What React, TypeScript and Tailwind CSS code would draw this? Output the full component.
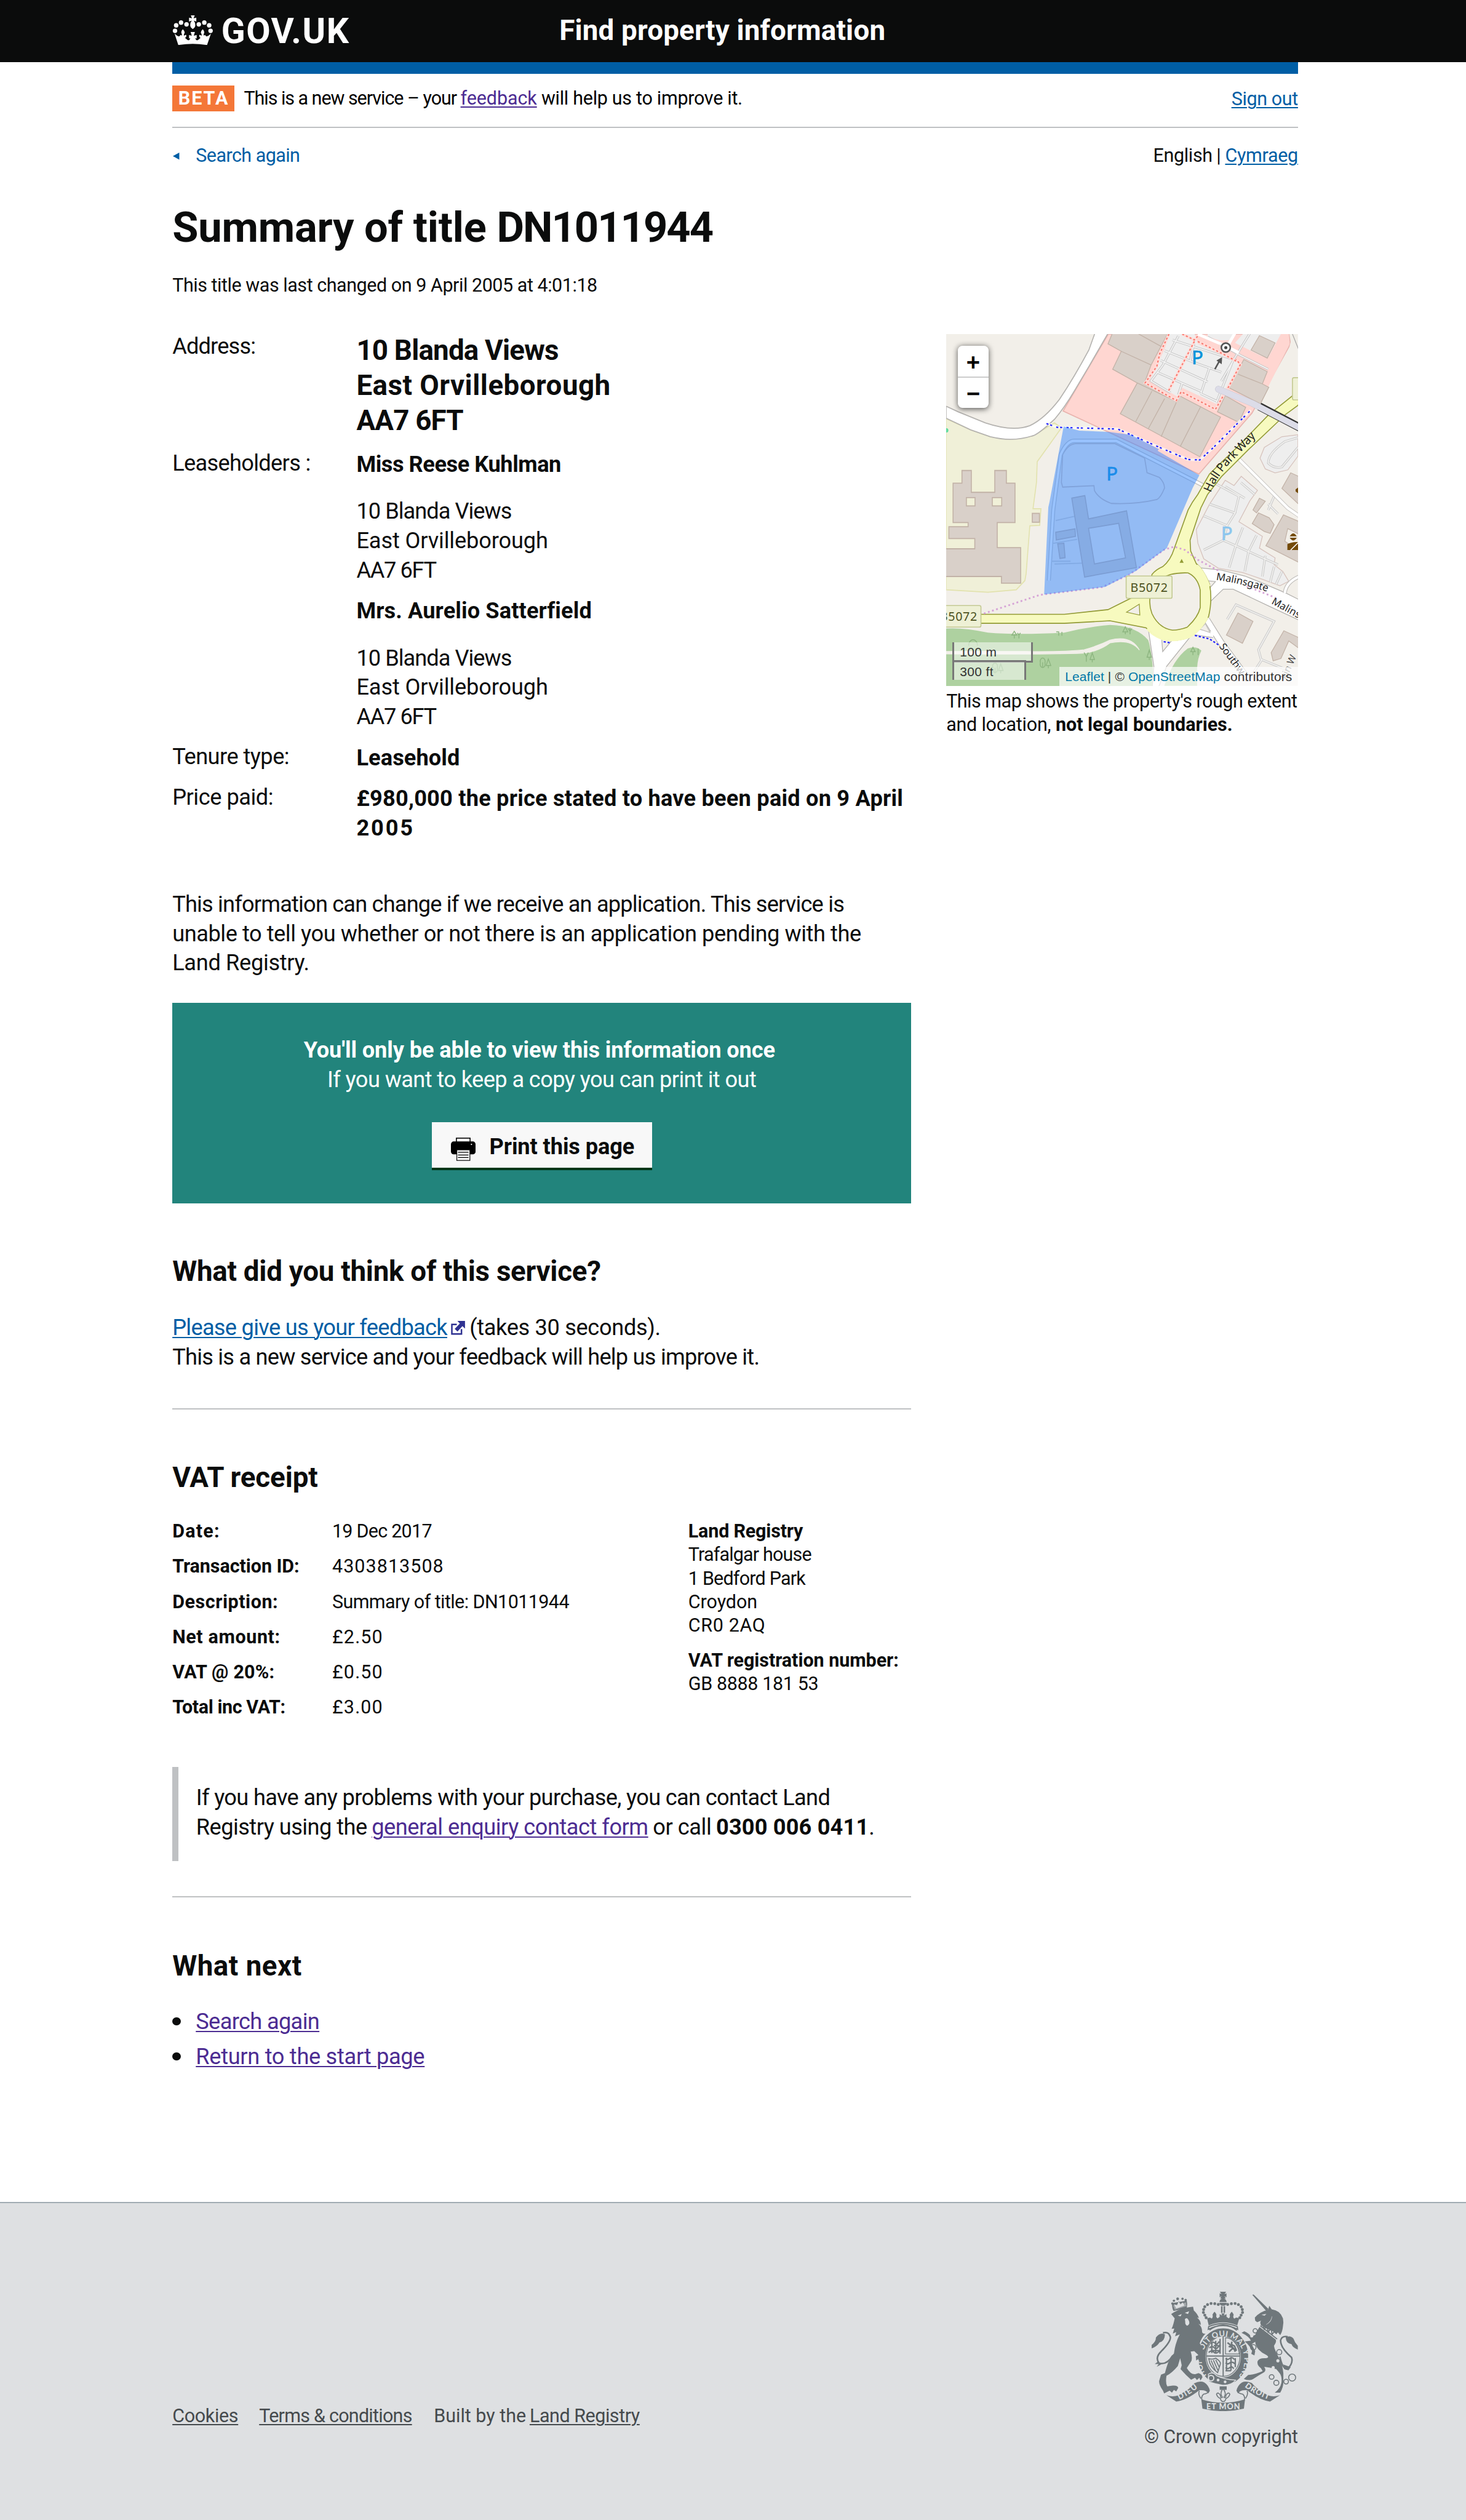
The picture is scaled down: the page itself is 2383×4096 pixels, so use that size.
import React from "react";

const P19 = "text-[19px] leading-[25px]";
const P16 = "text-[16px] leading-[20px]";
const H24 = "text-[24px] leading-[30px] font-bold";
const LINK = "underline decoration-[1.1px] underline-offset-[1.5px]";

function CrownLogo() {
  return (
    <svg className="mt-[12.5px] h-[26px] w-[35px]" viewBox="42 75 210 156" fill="#fff">
      <circle cx="87" cy="115" r="11.5" />
      <circle cx="62" cy="129" r="11.5" />
      <circle cx="56" cy="157" r="11.5" />
      <circle cx="115" cy="124" r="11.5" />
      <circle cx="178" cy="124" r="11.5" />
      <circle cx="206" cy="115" r="11.5" />
      <circle cx="231" cy="129" r="11.5" />
      <circle cx="238" cy="157" r="11.5" />
      <path d="M137 78 H157 L151 93 L165 90 V110 L152 105 Q160 114 160 128 Q160 141 147 148 Q134 141 134 128 Q134 114 142 105 L128 110 V90 L143 93 Z" />
      <path d="M54 172 Q66 184 76 186 Q84 184 83 178 L91 181 Q93 175 88 166 Q90 154 96 149 Q104 156 106 166 Q100 174 102 182 L112 177 Q118 186 108 193 Q104 198 110 203 L124 206 Q132 206 134 194 L128 197 V179 L142 182 L136 163 H158 L152 182 L167 179 V197 L160 194 Q162 206 170 206 L184 203 Q190 198 186 193 Q176 186 182 177 L192 182 Q194 174 188 166 Q190 156 198 149 Q204 154 206 166 Q201 175 203 181 L211 178 Q210 184 218 186 Q228 184 240 172 L220 230 Q147 218 73 230 Z" />
      <path d="M103 190 Q106 200 96 204 L90 208 Q112 212 124 207 M191 190 Q188 200 198 204 L204 208 Q182 212 170 207" />
    </svg>
  );
}

function PrinterIcon() {
  return (
    <svg className="h-[20px] w-[21px]" viewBox="147 119 126 120">
      <rect x="175" y="122" width="70" height="30" fill="#f8f8f8" stroke="#000" strokeWidth="5" />
      <rect x="147" y="139" width="126" height="66" rx="14" fill="#000" />
      <circle cx="252" cy="154" r="3.5" fill="#fff" />
      <rect x="177" y="182" width="67" height="54" fill="#f8f8f8" stroke="#111" strokeWidth="4" />
      <path d="M183 194 H237 M183 208 H237 M183 221 H237" stroke="#000" strokeWidth="4" />
    </svg>
  );
}

function ExternalIcon() {
  return (
    <svg className="ml-[3px] inline-block h-[12px] w-[12px] align-baseline" viewBox="0 0 12 12">
      <path d="M5 3 H0.8 V11.2 H9 V7" fill="none" stroke="#2e3191" strokeWidth="1.3" />
      <path d="M5.5 0 H12 V6.5 L9.8 4.4 L5.6 9 L3.2 6.8 L7.6 2.2 Z" fill="#2e3191" />
    </svg>
  );
}

function MapDrawing() {
  const bld = { fill: "#d9d0c9", stroke: "#c2b2a7" };
  return (
    <svg className="block h-[300px] w-[300px]" viewBox="0 0 300 300">
      <defs>
        <path id="hall" d="M706 842 Q735 765 800 695 L985 505" />
        <path id="mal1" d="M733 388 Q860 405 1000 450" />
        <path id="mal2" d="M1014 508 L1200 610" />
        <path id="south" d="M748 728 Q790 790 900 930" />
      </defs>
      <rect width="300" height="300" fill="#f2efe9" />

      <g transform="scale(.21046 .23597) translate(-81 -64)" strokeWidth="4">
        <path d="M81 370 L180 410 L260 435 L350 443 L430 432 L520 385 L548 403 L450 525 L447 600 L433 695 H465 L460 755 L420 757 L405 930 L400 955 L365 988 L250 997 L81 988Z" fill="#f0f0d8" stroke="#e2e2ae" />
        <path d="M738 64 L555 342 L1105 570 L1320 350 L1470 110 L1475 92 L1470 64Z" fill="#ffd6d1" stroke="#e8b3ae" />
        <path d="M81 325 L130 345 L240 385 Q350 418 420 395 Q480 370 540 300 Q600 220 660 120 L688 50 H745 L735 64 L660 180 L600 270 Q560 330 520 372 Q450 430 430 432 Q350 455 260 435 L180 410 L81 368Z" fill="#fff" stroke="#b5b3b0" />
        <circle cx="82" cy="412" r="8" fill="#5fdc9f" />
        <path d="M145 557H183V636H278V557H325V603H360V745H288V836H383V964H305V940H70V840H197V803H92V760H170V745H109V603H145Z" {...bld} />
        <rect x="163" y="655" width="35" height="30" fill="#f0f0d8" stroke="#c2b2a7" />
        <rect x="268" y="655" width="38" height="30" fill="#f0f0d8" stroke="#c2b2a7" />
        <rect x="430" y="712" width="29" height="32" {...bld} />
        <path d="M81 1128 Q150 1124 250 1143 Q370 1152 560 1143 Q650 1122 745 1115 Q850 1118 900 1170 Q915 1210 925 1340 H81Z" fill="#aed1a0" />
        <path d="M965 1335 Q1000 1240 1060 1200 Q1095 1190 1115 1208 Q1100 1235 1098 1270 V1335Z" fill="#aed1a0" />
        <path d="M81 1211 H400 Q560 1213 640 1205 Q700 1190 745 1170 Q830 1150 864 1206 Q830 1165 745 1180 Q700 1210 640 1217 Q500 1222 81 1220Z" fill="#f2efe9" stroke="#f2efe9" strokeWidth="3" />
        <g fill="none" stroke="#8db580" strokeWidth="3.5">
          <path d="M347 1152 l10 -14 l10 14z M357 1152 v12 M376 1148 v16 M370 1144 l6 8 l6 -8 M527 1140 h10 v14 M550 1140 v14 M797 1140 l10 -18 l10 18z M807 1140 v9 M826 1125 v24 M818 1128 l8 10 l8 -10" />
          <path d="M640 1215 l9 15 l8 -15 M649 1230 v18 M664 1240 l9 -24 l9 24z M673 1240 v10 M463 1252 a10 12 0 1 0 18 0 a10 12 0 1 0 -18 0 M472 1250 v20 M486 1262 l9 -24 l10 24z M495 1262 v10 M895 1232 l9 -26 l9 26z M904 1232 v10 M1072 1212 l9 -16 l9 16z M1081 1212 v12 M1102 1200 v24 M270 1270 a10 12 0 1 0 18 0 a10 12 0 1 0 -18 0 M279 1270 v20 M293 1280 l9 -24 l10 24z M302 1280 v10 M172 1190 a10 12 0 1 1 36 0" />
        </g>
        <path d="M553 617 L548 600 L553 500 Q575 462 605 460 L765 460 L885 512 L895 565 L945 582 Q965 600 966 620 Q950 655 935 662 Q850 680 750 676 Q700 660 682 630 L680 612Z" fill="#f2efe9" stroke="#cdbdb5" />
        <path d="M497 955 L515 700 L545 500 Q570 450 600 450 L770 450 L1125 612" fill="none" stroke="#c8c6c2" strokeWidth="16" />
        <path d="M497 955 L515 700 L545 500 Q570 450 600 450 L770 450 L1125 612" fill="none" stroke="#fff" strokeWidth="9" />
        <path d="M508 885 H585 M525 738 L605 722 M515 820 L612 806 M520 895 L632 892" fill="none" stroke="#d0ccc8" />
        <path fillRule="evenodd" d="M590 657 L643 648 L658 732 L812 703 L852 908 L642 942Z M658 766 L780 748 L808 873 L682 895Z" {...bld} />
        <path d="M525 780 L603 768 L605 795 L527 808Z M533 822 L558 820 L563 872 L542 875Z" {...bld} />
      </g>

      {/* Retail park */}
      <g transform="translate(108 -5) scale(.166667)" strokeWidth="4">
        <path d="M498 20 L470 105 L395 265 L535 350 L560 305 L735 388 L860 178 L640 80 L620 20Z M690 40 Q760 75 820 55 L830 20 H690Z M870 30 H1070 L1000 160 L830 75Z" fill="#eee" />
        <path d="M1070 20 H1105 L1110 80 L1000 300 L960 390 L880 350 L870 160 L850 120 L1000 150Z" fill="#ffd6d1" />
        <g fill="none" stroke="#c4c4c4" strokeWidth="12">
          <path d="M510 60 L840 165 M470 115 L620 175 L760 225 M450 165 L690 275 M430 225 L660 325 M540 40 L460 190 L400 270 L500 330 M700 200 L655 335 M820 165 L735 380 M560 280 L540 340 M655 335 L740 375 M760 270 L830 150 L910 20 M690 45 L860 140 L1000 210 M620 80 L600 170" />
        </g>
        <g fill="none" stroke="#f3f3f3" strokeWidth="6">
          <path d="M510 60 L840 165 M470 115 L620 175 L760 225 M450 165 L690 275 M430 225 L660 325 M540 40 L460 190 L400 270 L500 330 M700 200 L655 335 M820 165 L735 380 M560 280 L540 340 M655 335 L740 375 M760 270 L830 150 L910 20 M690 45 L860 140 L1000 210 M620 80 L600 170" />
        </g>
        <path d="M640 30 L780 90 L850 125 M830 25 L795 85" stroke="#fff" strokeWidth="15" fill="none" />
        <path d="M205 20 L180 80 L248 118 L204 210 L330 280 L243 438 L650 658 L756 455 L545 345 L535 375 L365 285 L400 190 L490 20Z" {...bld} />
        <path d="M320 20 L455 95 M248 118 L400 188 M330 280 L530 375 M405 322 L322 478 M470 360 L386 515 M545 345 L452 555 M655 400 L550 605" fill="none" stroke="#c2b2a7" />
        <path d="M780 345 L885 405 L850 482 L740 428Z M955 38 L1035 75 L995 153 L912 112Z M875 160 L995 222 L970 285 L1003 302 L960 387 L800 305Z M845 235 L970 285" {...bld} />
        <path d="M492 30 L445 130 L430 195 L370 280 L530 370 L555 325 L730 415 L800 295 L858 185 L835 160 M560 30 L622 60 L640 40 M622 68 L490 320 M640 68 L775 135 L835 168" fill="none" stroke="#ffdcd8" strokeWidth="14" />
        <path d="M492 30 L445 130 L430 195 L370 280 L530 370 L555 325 L730 415 L800 295 L858 185 L835 160 M560 30 L622 60 L640 40 M622 68 L490 320 M640 68 L775 135 L835 168" fill="none" stroke="#f9776c" strokeWidth="6.5" strokeDasharray="10 11" />
        <path d="M1120 20 L1160 120" stroke="#aaa" />
      </g>

      {/* East side parking and buildings */}
      <g transform="translate(108 145) scale(.166667)" strokeWidth="4">
        <path d="M700 0 L780 -122 L825 -95 L862 -142 L945 -70 L905 -15 L850 90 L970 165 L955 225 L1035 275 L1030 310 L1075 345 L1105 395 L1060 418 L970 385 L870 350 L745 328 L670 280 L640 200 L632 130Z" fill="#eee" stroke="#d6c2bc" />
        <path d="M1152 -355 L1070 -345 L980 -290 L958 -235 L985 -180 L1035 -160 L1100 -175 L1152 -245Z" fill="#eee" stroke="#d6c2bc" />
        <g fill="none" stroke="#c8c8c8" strokeWidth="12">
          <path d="M700 0 L830 45 L790 110 M670 60 L790 110 L770 185 L670 235 M770 185 L850 220 L970 275 L1050 310 M870 120 L835 210 L800 325 M940 160 L900 240 L880 345 M720 -110 L850 -40 L830 45 M780 -90 L880 -30 M860 -110 L930 -50 M985 265 L970 370 M1030 320 L1010 400 M1070 345 L1040 410 M1000 0 L1050 50 M1030 -40 L1000 30 M1152 -340 L1085 -320 Q1000 -260 1000 -210 Q1030 -180 1070 -190 L1152 -290" />
          <path d="M790 590 L835 515 L1030 600 L950 745 L965 800 L900 900 M965 795 L1100 850" />
        </g>
        <g fill="none" stroke="#f1f0ee" strokeWidth="6">
          <path d="M700 0 L830 45 L790 110 M670 60 L790 110 L770 185 L670 235 M770 185 L850 220 L970 275 L1050 310 M870 120 L835 210 L800 325 M940 160 L900 240 L880 345 M720 -110 L850 -40 L830 45 M780 -90 L880 -30 M860 -110 L930 -50 M985 265 L970 370 M1030 320 L1010 400 M1070 345 L1040 410 M1000 0 L1050 50 M1030 -40 L1000 30 M1152 -340 L1085 -320 Q1000 -260 1000 -210 Q1030 -180 1070 -190 L1152 -290" />
          <path d="M790 590 L835 515 L1030 600 L950 745 L965 800 L900 900 M965 795 L1100 850" />
        </g>
        <path d="M850 -230 L1100 20 L1160 62" fill="none" stroke="#c9c7c4" strokeWidth="20" />
        <path d="M850 -230 L1100 20 L1160 62" fill="none" stroke="#fff" strokeWidth="14" />
        <path d="M1115 -160 L1160 -140 V5 L1070 -80Z M955 -30 L985 -15 L940 45 L922 30Z M950 45 L1005 70 L1030 105 L1010 150 L980 140 L918 100Z M1078 55 L1160 90 V300 L988 213Z M845 557 L922 600 L868 712 L786 670Z M1080 648 L1160 685 V740 L1105 700 L1065 790 L1025 802 L1015 760Z" {...bld} />
        <path d="M1100 125 L1160 155 V240 L1085 190Z" fill="#f2efe9" stroke="#c2b2a7" />
        <path d="M1110 165 Q1128 135 1146 165Z M1110 172 H1146 Q1128 200 1110 172Z M1098 205 Q1125 190 1160 195 V235 H1098Z" fill="#734a08" />
        <path d="M1115 235 L1155 195" stroke="#fff" strokeWidth="5" />
        <path d="M1160 -90 L1140 -75 V-65 L1160 -50Z" fill="#734a08" />

        {/* Malinsgate and the southern roads */}
        <path d="M640 325 L760 338 L880 368 L960 400 L1090 455 L1160 490 V595 L1000 520 L820 435 H770 L690 512 L700 440Z" fill="#fff" stroke="#b3b1ae" />
        <path d="M684 392 L730 396 L702 428Z" fill="#f2efe9" stroke="#b3b1ae" />
        <path d="M1085 455 Q1090 400 1160 370" fill="none" stroke="#c0bebb" strokeWidth="20" />
        <path d="M1085 455 Q1090 400 1160 370" fill="none" stroke="#fff" strokeWidth="13" />
        <path d="M385 630 L415 830 L405 960 H430 L480 830 L600 680 L500 660Z" fill="#fff" stroke="#b3b1ae" />
        <path d="M455 690 L460 755 L505 700Z" fill="#f2efe9" stroke="#b3b1ae" />
        <path d="M600 650 L720 668 M685 590 L760 710 L900 900" fill="none" stroke="#b3b1ae" strokeWidth="34" />
        <path d="M600 650 L720 668 M685 590 L760 710 L900 900" fill="none" stroke="#fff" strokeWidth="27" />
        <path d="M650 640 L678 612 L702 657Z" fill="#f2efe9" stroke="#c3c1be" />
        <path d="M-520 564 L-43 564 L180 540 L290 485 L395 440 L405 360 Q425 335 460 320 Q500 290 520 225 L590 30 Q610 -10 640 -50 L700 -155 L850 -300 L1000 -455 L1125 -555 H1180 L1152 -505 L1090 -460 L900 -280 L760 -140 L690 -50 L655 20 L600 185 L603 240 L632 305 Q665 330 700 410 Q715 490 695 575 Q655 645 600 680 Q520 710 455 690 Q405 670 375 633 L190 597 L-43 610 L-520 610Z" fill="#f7fabf" stroke="#929a35" strokeWidth="5" />
        <path d="M636 312 Q670 340 700 420 M690 580 Q650 650 600 680 Q520 708 455 690 Q405 670 380 638" fill="none" stroke="#f7fabf" strokeWidth="9" />
        <path d="M500 360 Q540 350 590 352 Q640 375 652 440 V530 Q640 580 585 630 Q545 645 510 645 Q440 635 405 560 Q390 520 395 480 L395 400 Z" fill="#f2efe9" stroke="#929a35" strokeWidth="5" />
        <path d="M275 553 L340 512 L343 568Z" fill="#f2efe9" stroke="#929a35" />
        <path d="M550 298 L557 285 L564 298Z" fill="#929a35" stroke="#929a35" />

        {/* Covered footbridge */}
        <path d="M745 -588 L920 -515 L1180 -380" fill="none" stroke="#b9b9c4" strokeWidth="33" strokeLinecap="round" />
        <path d="M955 -500 L1180 -382" fill="none" stroke="#333" strokeWidth="42" />
        <path d="M745 -588 L920 -515 L1180 -380" fill="none" stroke="#dcdce8" strokeWidth="31" strokeLinecap="round" />

        {/* Paths */}
        <path d="M-135 -412 L-80 -393 L230 -384 L440 -292 L590 -228 L650 -226 L720 -290 L910 -480" fill="none" stroke="#fff" strokeWidth="13" opacity=".7" />
        <path d="M-135 -412 L-80 -393 L230 -384 L440 -292 L590 -228 L650 -226 L720 -290 L910 -480" fill="none" stroke="#2222ff" strokeWidth="7" strokeDasharray="11 9 11 22" />
        <path d="M-455 560 L-170 465 L150 425 L290 360 L470 232 L520 218 L575 235 L640 285 L745 340 M890 420 L1040 480" fill="none" stroke="#d6a3d6" strokeWidth="9" strokeDasharray="9 13" />
        <path d="M465 704 L500 710 M625 672 L700 690 L745 720" fill="none" stroke="#2222ff" strokeWidth="7" strokeDasharray="11 9" />
      </g>

      {/* Property extent */}
      <g transform="scale(.21046 .23597) translate(-81 -64)">
        <path d="M557 398 L620 413 L745 418 L830 428 L943 480 L938 486 L1107 574 L1080 620 L975 838 L925 870 L850 920 L725 978 L478 1005 L495 690 L500 670Z" fill="#3388ff" fillOpacity=".5" />
      </g>

      {/* Labels and markers */}
      <g transform="translate(108 145) scale(.166667)" fontFamily="'Noto Sans', sans-serif">
        <g fontSize="98" fontFamily="'Noto Sans', sans-serif" textAnchor="middle">
          <text x="638" y="-716" fill="#0092da" stroke="#0092da" strokeWidth="2">P</text>
          <text x="201" y="-122" fill="#1a8cea" stroke="#1a8cea" strokeWidth="2">P</text>
          <text x="788" y="184" fill="#8cc6ee" stroke="#8cc6ee" strokeWidth="2">P</text>
        </g>
        <circle cx="783" cy="-801" r="23" fill="#fff" stroke="#555" strokeWidth="8" />
        <circle cx="783" cy="-801" r="8" fill="#444" />
        <path d="M727 -690 L750 -732" stroke="#555" strokeWidth="8" />
        <path d="M764 -752 L735 -735 L762 -716Z" fill="#555" />
        <rect x="273" y="368" width="235" height="114" rx="8" fill="#eef0d5" stroke="#c3c992" strokeWidth="5" />
        <text x="390" y="448" textAnchor="middle" fontSize="62" textLength="190" fill="#4d5220">B5072</text>
        <rect x="-712" y="519" width="242" height="110" rx="8" fill="#eef0d5" stroke="#c3c992" strokeWidth="5" />
        <text x="-490" y="597" textAnchor="end" fontSize="62" textLength="190" fill="#4d5220">B5072</text>
        <rect x="1124" y="-647" width="100" height="114" rx="8" fill="#eef0d5" stroke="#c3c992" strokeWidth="5" />
        <g fill="#222" stroke="#fff" strokeOpacity=".6" strokeWidth="5" paintOrder="stroke">
          <text transform="translate(0 -900)" fontSize="60" strokeOpacity="0"><textPath href="#hall" textLength="372">Hall Park Way</textPath></text>
          <text fontSize="52"><textPath href="#mal1">Malinsgate</textPath></text>
          <text fontSize="52"><textPath href="#mal2">Malins</textPath></text>
          <text fontSize="52"><textPath href="#south">Southw</textPath></text>
          <text transform="translate(1092 900) rotate(-66)" fontSize="50" opacity=".8">kin W</text>
        </g>
      </g>
    </svg>
  );
}

function PropertyMap() {
  return (
    <div className="relative h-[300px] w-[300px] overflow-hidden font-['Liberation_Sans',sans-serif]">
      <MapDrawing />
      <div className="absolute left-[10px] top-[10px] w-[26px] overflow-visible rounded-[4px] bg-white text-center text-[20px] font-bold leading-[28px] text-black shadow-[0_1px_5px_rgba(0,0,0,0.65)]">
        <div className="h-[27px] border-b-[1.1px] border-[#ccc]">+</div>
        <div className="h-[26px] leading-[27px]">−</div>
      </div>
      <div className="absolute bottom-[5px] left-[5px] text-[11px] leading-[13px] text-[#333]">
        <div className="h-[17px] w-[69px] border-2 border-t-0 border-[#777] bg-white/50 px-[5px] pt-[2px] tracking-[0.02em]">100 m</div>
        <div className="-mt-[2px] h-[17px] w-[63px] border-2 border-b-0 border-[#777] bg-white/50 px-[5px] pt-[2px] tracking-[0.02em]">300 ft</div>
      </div>
      <div className="absolute bottom-0 right-0 h-[16px] whitespace-nowrap bg-white/70 px-[5px] text-[11px] leading-[17px] tracking-[0.006em] text-[#333]">
        <span className="text-[#0078a8]">Leaflet</span> | © <span className="text-[#0078a8]">OpenStreetMap</span> contributors
      </div>
    </div>
  );
}

function Crest() {
  const ink = "#6f777b";
  const pale = "#dee0e2";
  return (
    <svg className="h-[102px] w-[125px]" viewBox="192 144 750 612" fill={ink} fontFamily="Lato, sans-serif">
      <defs>
        <path id="garter" d="M474 572 A 109 122 0 1 1 632 583" />
        <path id="dieu" d="M334 696 Q385 672 438 628" />
        <path id="droit" d="M668 630 Q720 672 800 698" />
      </defs>
      {/* Imperial crown */}
      <path d="M541 144 H573 L565 156 L575 152 V172 L565 167 L571 179 H543 L549 167 L540 172 V152 L550 156Z M539 197 Q541 180 557 178 Q574 180 576 197Z M539 201 H576 Q576 216 557 216 Q540 216 539 201Z M547 218 H555 V252 H547Z M560 218 H568 V252 H560Z" />
      {[[533, 209], [515, 205], [496, 204], [478, 210], [464, 221], [458, 235], [457, 250], [464, 264], [471, 277], [581, 209], [600, 205], [619, 204], [636, 210], [650, 221], [656, 235], [657, 250], [650, 264], [643, 277]].map(([x, y], i) => (
        <circle key={i} cx={x} cy={y} r="7.5" />
      ))}
      <path d="M476 282 Q490 270 500 282 Q508 270 503 262 Q508 250 514 246 Q521 252 524 262 Q519 274 530 280 L540 272 V258 L553 266 L549 255 H566 L561 266 L575 258 V272 L586 280 Q596 274 591 262 Q596 250 602 246 Q608 252 612 262 Q606 274 615 282 Q626 270 640 282 L630 316 Q557 285 484 316Z" />
      <path d="M484 322 Q557 292 630 322 L632 336 Q557 298 482 336Z M488 340 Q520 316 557 314 Q600 316 628 342" fill="none" stroke={ink} strokeWidth="6" />
      {/* Garter and shield */}
      <ellipse cx="558" cy="476" rx="109" ry="126" fill="none" stroke={ink} strokeWidth="38" />
      <ellipse cx="558" cy="474" rx="86" ry="103" fill={pale} stroke={ink} strokeWidth="4" />
      <path d="M555 370 H561 V575 H555Z M472 470 H645 V476 H472Z" />
      <g fill="none" stroke={ink} strokeWidth="7">
        <path d="M495 410 q12 -14 22 -2 t20 -10 M488 432 q12 -14 24 -2 t24 -8 M484 455 q14 -14 26 -2 t30 -6 M500 402 v55 M520 395 v66 M542 385 v76 M510 420 h36 M495 445 h50" />
        <path d="M570 485 q12 10 22 0 t24 6 M570 508 q12 10 22 0 t28 6 M570 532 q12 10 22 0 t20 6 M575 482 v70 M598 482 v66 M620 484 v46 M570 548 h28" />
        <path d="M570 380 Q600 380 622 410 Q640 436 640 462 H570Z" strokeWidth="4" />
        <path d="M580 405 q20 12 28 28 l-20 18 M604 400 q-10 14 12 22 l10 24 M586 425 q24 -4 34 26" strokeWidth="8" />
        <path d="M484 486 Q505 492 520 484 Q545 500 544 512 L530 558 Q490 530 484 486Z M496 495 L520 550 M508 494 L532 548 M520 492 L538 530" strokeWidth="5" />
      </g>
      <text fontSize="40" fontWeight="700" fill={pale}>
        <textPath href="#garter" textLength="560">HON SOIT QUI MAL Y PENSE</textPath>
      </text>
      <path d="M482 566 Q505 550 525 574 Q560 592 622 596 Q600 624 555 622 Q515 616 485 604Z" stroke={pale} strokeWidth="4" />
      <circle cx="532" cy="596" r="7" fill={pale} />
      <circle cx="568" cy="605" r="7" fill={pale} />
      <circle cx="496" cy="586" r="14" fill="none" stroke={pale} strokeWidth="6" />
      {/* Lion */}
      <path d="M304 242 Q296 228 296 202 L372 190 Q376 208 372 228Z M318 230 Q340 222 360 214 L350 198 L340 210 L330 192 L322 214 L306 208Z" />
      <circle cx="298" cy="204" r="6" /><circle cx="306" cy="190" r="6" /><circle cx="325" cy="180" r="7" /><circle cx="350" cy="180" r="6" /><circle cx="366" cy="186" r="6" />
      <path d="M302 214 L368 198 L370 218 L310 236Z" fill={pale} opacity=".45" />
      <path d="M292 258 L308 248 Q345 226 404 220 L408 240 Q426 256 434 278 L424 276 Q444 290 444 314 L432 308 Q452 326 450 352 Q458 362 468 358 Q446 380 438 408 Q466 450 468 492 L455 508 L448 492 L438 506 L432 488 L420 496 L418 474 L432 468 L410 448 L392 450 Q404 490 392 504 L372 534 Q392 568 415 566 L432 560 Q452 566 452 582 L442 598 L436 584 L424 596 L414 584 L394 594 Q366 570 340 540 L346 520 L338 484 L326 524 Q296 560 268 574 Q262 612 272 628 L300 624 Q326 622 328 636 L318 654 L306 646 L296 660 L284 650 L256 664 L250 650 Q230 622 230 602 L240 568 L260 560 Q280 480 306 460 Q314 400 336 362 L312 372 L318 350 L300 358 L308 332 L294 334 Q304 312 310 280Z" />
      <path d="M326 266 L346 258 L340 270Z M362 252 L384 244 L378 258Z M362 284 Q374 270 384 296 Q388 312 374 318 Q362 312 364 298Z" fill={pale} />
      <path d="M300 470 Q270 520 230 510 Q208 480 240 450 Q290 400 288 376 Q280 346 250 354" fill="none" stroke={ink} strokeWidth="8" />
      <path d="M260 362 Q236 350 214 378 Q214 400 192 416 V434 Q220 424 232 404 Q260 396 260 362Z M226 500 L208 514 L228 514 L218 528 L240 516Z" />
      {/* Unicorn */}
      <path d="M707 160 L714 158 L790 232 L780 244Z" />
      <path d="M788 236 L794 216 L806 234 Q850 240 864 280 Q868 300 864 320 Q862 346 850 366 L838 352 L830 362 L812 346 Q780 334 752 316 Q744 300 752 292 L732 300 L722 292 L720 276 Q746 246 788 236Z" />
      <path d="M756 262 L778 258 L770 266Z M778 312 Q806 300 808 270 Q804 296 778 312Z" fill={pale} stroke={pale} />
      <path d="M748 318 L834 386 M762 312 l6 24 l14 -16 l6 30 l16 -20 l4 32 l18 -20" fill="none" stroke={ink} strokeWidth="6" />
      <path d="M744 324 Q728 350 722 364 L702 374 Q690 356 666 346 L652 354 Q690 372 700 394 L668 398 Q690 414 706 446 L702 462 L718 470 L722 448 L704 412 L722 400 Q724 440 776 466 Q800 480 776 484 Q740 482 734 500 Q730 520 752 536 L760 550 Q720 568 686 570 L664 590 Q690 602 712 590 Q740 572 768 556 Q780 546 768 528 Q800 532 830 540 L848 562 Q860 580 856 610 Q850 640 822 660 H850 Q868 630 866 600 V560 Q862 520 848 490 Q820 440 818 420 Q834 400 826 388Z" />
      <path d="M848 476 Q862 540 886 540 Q918 510 908 480 Q850 430 852 392 Q858 368 888 374" fill="none" stroke={ink} strokeWidth="8" />
      <path d="M878 378 Q900 364 918 384 Q924 404 940 420 V440 Q912 428 908 412 Q880 410 878 378Z M866 516 L870 540 L892 546 L904 530Z" />
      <g fill="none" stroke={ink} strokeWidth="5">
        <circle cx="722" cy="344" r="11" /><circle cx="712" cy="428" r="14" /><circle cx="845" cy="453" r="13" /><circle cx="806" cy="580" r="12" /><circle cx="830" cy="610" r="13" /><circle cx="880" cy="604" r="12" /><circle cx="911" cy="583" r="18" />
      </g>
      <circle cx="704" cy="370" r="8" fill={pale} /><circle cx="838" cy="497" r="8" fill={pale} /><circle cx="814" cy="532" r="8" fill={pale} />
      {/* Motto ribbon */}
      <path d="M268 674 Q300 684 330 674 Q390 640 410 612 Q440 598 462 608 Q484 622 490 650 L482 664 Q470 644 436 648 Q370 700 318 706Z" />
      <path d="M848 674 Q816 684 786 674 Q726 640 706 612 Q676 598 654 608 Q632 622 626 650 L634 664 Q646 644 680 648 Q746 700 798 706Z" />
      <path d="M446 694 Q557 730 670 694 L664 742 Q557 768 452 742Z" />
      <path d="M486 652 Q480 664 458 668 Q444 680 450 700 M436 650 Q428 668 444 690 M630 652 Q636 664 658 668 Q672 680 666 700 M680 650 Q688 668 672 690" fill="none" stroke={ink} strokeWidth="5" />
      <path d="M540 628 H576 V646 H540Z" />
      <path d="M557 640 Q578 664 562 684 Q572 690 572 674 Q584 654 592 668 Q588 684 572 690 Q570 706 558 706 Q546 706 544 690 Q528 684 524 668 Q532 654 544 674 Q544 690 554 684 Q538 664 557 640Z" fill={pale} stroke={ink} strokeWidth="5" />
      <g fontSize="40" fontWeight="900" fill={pale}>
        <text x="558" y="746" textAnchor="middle" textLength="172">ET MON</text>
        <text><textPath href="#dieu" textLength="112">DIEU</textPath></text>
        <text><textPath href="#droit" textLength="138">DROIT</textPath></text>
      </g>
    </svg>
  );
}

const receipt = [
  { label: "Date:", lt: "tracking-[0.04em]", value: "19 Dec 2017", vt: "tracking-[-0.0245em]" },
  { label: "Transaction ID:", lt: "tracking-[-0.002em]", value: "4303813508", vt: "tracking-[0.0345em]" },
  { label: "Description:", lt: "tracking-[0.018em]", value: "Summary of title: DN1011944", vt: "tracking-[-0.019em]" },
  { label: "Net amount:", lt: "tracking-[0.02em]", value: "£2.50", vt: "tracking-[0.038em]" },
  { label: "VAT @ 20%:", lt: "tracking-[0.0066em]", value: "£0.50", vt: "tracking-[0.038em]" },
  { label: "Total inc VAT:", lt: "tracking-[-0.0138em]", value: "£3.00", vt: "tracking-[0.038em]" },
];

function HolderAddress() {
  return (
    <div className={P19}>
      <div className="tracking-[-0.027em]">10 Blanda Views</div>
      <div className="tracking-[-0.004em]">East Orvilleborough</div>
      <div className="tracking-[-0.0381em]">AA7 6FT</div>
    </div>
  );
}

export default function App() {
  return (
    <div className="w-full overflow-hidden bg-white font-[Roboto,sans-serif] text-[#0b0c0c] [zoom:1.906]">
      <header className="flex h-[53px] bg-[#0b0c0c] pl-[147px] text-white">
        <div className="flex w-[330px]">
          <CrownLogo />
          <div className="ml-[6.7px] pt-[7px] text-[30px] font-bold leading-[40px] tracking-[0.0271em]">GOV.UK</div>
        </div>
        <div className={`${H24} pt-[11px] tracking-[0.004em]`}>Find property information</div>
      </header>

      <div className="ml-[147px] w-[960px] whitespace-nowrap">
        <div className="h-[10px] bg-[#005ea5]" />
        <div className="flex h-[46px] border-b-[1.1px] border-[#bfc1c3] pt-[10px] text-[16px] leading-[21px]">
          <div className="h-[22px] w-[53px] bg-[#f47738] pl-[5px] font-bold leading-[22px] tracking-[0.0657em] text-white">BETA</div>
          <div className="ml-[8px] pt-[0.5px] text-black">
            <span className="tracking-[-0.034em]">This is a new service – your </span>
            <span className={`${LINK} tracking-[-0.003em] text-[#4c2c92]`}>feedback</span>
            <span className="tracking-[-0.0095em]"> will help us to improve it.</span>
          </div>
          <div className={`${LINK} ml-auto pt-[1.2px] tracking-[-0.012em] text-[#005ea5]`}>Sign out</div>
        </div>

        <div className={`${P16} mt-[13.6px] flex items-start`}>
          <svg className="mt-[7.6px] h-[6px] w-[6px]" viewBox="0 0 6 6"><path d="M6 0 V6 L0.5 3Z" fill="#005ea5" /></svg>
          <span className="ml-[14px] tracking-[-0.018em] text-[#005ea5]">Search again</span>
          <span className="ml-auto tracking-[-0.012em]">English</span>
          <span className="ml-[3.5px] mr-[3.5px]">|</span>
          <span className={`${LINK} tracking-[-0.01em] text-[#005ea5]`}>Cymraeg</span>
        </div>

        <h1 className="mt-[31.4px] text-[36px] font-bold leading-[40px]">
          <span className="tracking-[-0.003em]">Summary of title </span><span className="tracking-[-0.029em]">DN1011944</span>
        </h1>
        <p className={`${P16} mt-[19.7px] tracking-[-0.015em]`}>This title was last changed on 9 April 2005 at 4:01:18</p>

        <div className="mt-[29.3px] flex items-start justify-between">
          <main className="w-[630px] pt-[0.6px]">
            <div className="grid grid-cols-[157px_1fr] gap-y-[10px]">
              <div className={`${P19} -mt-[1px] tracking-[-0.023em]`}>Address:</div>
              <div className={H24}>
                <div className="tracking-[-0.018em]">10 Blanda Views</div>
                <div className="tracking-[0.0105em]">East Orvilleborough</div>
                <div className="tracking-[-0.018em]">AA7 6FT</div>
              </div>
              <div className={`${P19} -mt-[1px] tracking-[-0.019em]`}>Leaseholders :</div>
              <div>
                <div className={`${P19} mb-[15px] font-bold tracking-[-0.0125em]`}>Miss Reese Kuhlman</div>
                <HolderAddress />
                <div className={`${P19} mb-[15px] mt-[10px] font-bold tracking-[0.003em]`}>Mrs. Aurelio Satterfield</div>
                <HolderAddress />
              </div>
              <div className={`${P19} -mt-[1px] tracking-[-0.015em]`}>Tenure type:</div>
              <div className={`${P19} font-bold tracking-[0.002em]`}>Leasehold</div>
              <div className={`${P19} -mt-[1px] tracking-[-0.013em]`}>Price paid:</div>
              <div className={`${P19} font-bold tracking-[0.0055em]`}>
                £980,000 the price stated to have been paid on 9 April
                <br />
                <span className="tracking-[0.0789em]">2005</span>
              </div>
            </div>

            <p className={`${P19} mt-[40px]`}>
              <span className="tracking-[-0.0227em]">This information can change if we receive an application. This service is</span><br />
              <span className="tracking-[-0.0125em]">unable to tell you whether or not there is an application pending with the</span><br />
              <span className="tracking-[-0.009em]">Land Registry.</span>
            </p>

            <section className="mt-[21.4px] flex h-[171px] flex-col items-center bg-[#22847c] pt-[28.2px] text-white">
              <div className={`${P19} pr-[4px] font-bold tracking-[-0.0034em]`}>You'll only be able to view this information once</div>
              <div className={`${P19} tracking-[-0.0165em]`}>If you want to keep a copy you can print it out</div>
              <div className="ml-[0.8px] mt-[23.8px] flex h-[41px] w-[188px] items-start border-b-[2.1px] border-[#003618] bg-[#f8f8f8] pl-[16px] pt-[8.4px] text-[#0b0c0c]">
                <div className="pt-[4.6px]"><PrinterIcon /></div>
                <span className={`${P19} ml-[12px] font-bold tracking-[-0.003em]`}>Print this page</span>
              </div>
            </section>

            <h2 className={`${H24} mt-[43.1px] tracking-[-0.0056em]`}>What did you think of this service?</h2>
            <p className={`${P19} mt-[20.5px]`}>
              <span className={`${LINK} tracking-[-0.0196em] text-[#005ea5]`}>Please give us your feedback<ExternalIcon /></span>
              <span className="ml-[4px] tracking-[-0.0095em]">(takes 30 seconds).</span><br />
              <span className="tracking-[-0.0215em]">This is a new service and your feedback will help us improve it.</span>
            </p>

            <div className="mt-[31.4px] h-[1px] bg-[#bfc1c3]" />

            <h2 className={`${H24} mt-[43.1px] tracking-[-0.002em]`}>VAT receipt</h2>
            <div className="mt-[21px] grid grid-cols-[440px_1fr]">
              <dl className="flex flex-col gap-[10px]">
                {receipt.map((r) => (
                  <div key={r.label} className={`${P16} grid grid-cols-[136.3px_1fr]`}>
                    <dt className={`font-bold ${r.lt}`}>{r.label}</dt>
                    <dd className={r.vt}>{r.value}</dd>
                  </div>
                ))}
              </dl>
              <div className={P16}>
                <div className="font-bold tracking-[-0.0061em]">Land Registry</div>
                <div className="tracking-[-0.0273em]">Trafalgar house</div>
                <div className="tracking-[-0.0261em]">1 Bedford Park</div>
                <div className="tracking-[-0.002em]">Croydon</div>
                <div className="tracking-[0.0211em]">CR0 2AQ</div>
                <div className="mt-[10px] font-bold tracking-[-0.0016em]">VAT registration number:</div>
                <div className="tracking-[-0.012em]">GB 8888 181 53</div>
              </div>
            </div>

            <div className={`${P19} mt-[40.9px] h-[80px] border-l-[5.3px] border-[#bfc1c3] pl-[15px] pt-[13.6px]`}>
              <span className="tracking-[-0.0185em]">If you have any problems with your purchase, you can contact Land</span><br />
              <span className="tracking-[-0.015em]">Registry using the</span>
              <span className={`${LINK} ml-[4px] tracking-[-0.0135em] text-[#4c2c92]`}>general enquiry contact form</span>
              <span className="ml-[4px] tracking-[-0.012em]">or call</span>
              <span className="ml-[4px] font-bold tracking-[0.004em]">0300 006 0411</span>.
            </div>

            <div className="mt-[30px] h-[1px] bg-[#bfc1c3]" />

            <h2 className={`${H24} mt-[43.4px] tracking-[0.011em]`}>What next</h2>
            <ul className={`${P19} mt-[20px] flex flex-col gap-[5px]`}>
              <li className="flex items-center"><span className="mr-[13px] h-[7px] w-[7px] rounded-full bg-[#0b0c0c]" /><a className={`${LINK} tracking-[-0.018em] text-[#4c2c92]`}>Search again</a></li>
              <li className="flex items-center"><span className="mr-[13px] h-[7px] w-[7px] rounded-full bg-[#0b0c0c]" /><a className={`${LINK} tracking-[-0.0085em] text-[#4c2c92]`}>Return to the start page</a></li>
            </ul>
          </main>

          <aside className="mt-[2px] w-[300px]">
            <PropertyMap />
            <div className={`${P16} mt-[3.1px]`}>
              <div className="tracking-[-0.0162em]">This map shows the property's rough extent</div>
              <span className="tracking-[-0.0073em]">and location,</span> <span className="font-bold tracking-[-0.001em]">not legal boundaries.</span>
            </div>
          </aside>
        </div>
      </div>

      <footer className="mt-[111.6px] h-[273px] border-t-[1.1px] border-[#a1acb2] bg-[#dee0e2] pl-[147px] text-[#454a4d]">
        <div className={`${P16} flex w-[960px] items-start justify-between whitespace-nowrap`}>
          <div className="flex pt-[171.3px]">
            <span className="w-[74px]"><span className={`${LINK} tracking-[-0.011em]`}>Cookies</span></span>
            <span className="w-[149px]"><span className={`${LINK} tracking-[-0.0245em]`}>Terms & conditions</span></span>
            <span>Built by the</span>
            <span className={`${LINK} ml-[3px] tracking-[-0.015em]`}>Land Registry</span>
          </div>
          <div className="flex flex-col items-end pt-[75.3px]">
            <Crest />
            <span className="mt-[12px] tracking-[-0.0049em]">© Crown copyright</span>
          </div>
        </div>
      </footer>
    </div>
  );
}
